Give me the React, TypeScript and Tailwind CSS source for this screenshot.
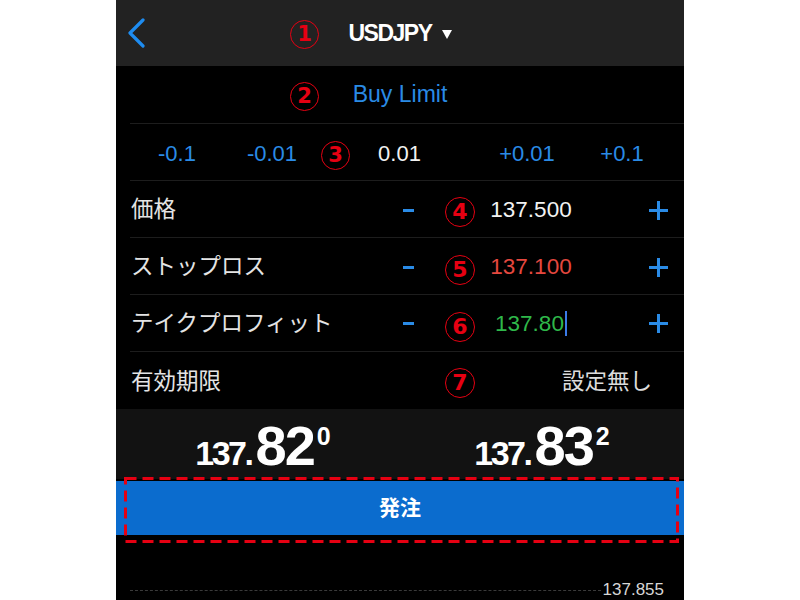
import React from 'react';

const Circled: React.FC<{ n: number; className: string }> = ({ n, className }) => (
  <div
    className={`absolute flex items-center justify-center rounded-full border-[1.5px] border-[#e60012] text-[#e60012] font-bold leading-none font-['DejaVu_Sans',sans-serif] ${className}`}
  >
    {n}
  </div>
);

const Minus: React.FC = () => (
  <div className="w-[40px] flex justify-center">
    <div className="w-[11px] h-[3px] bg-[#2a8be6]" />
  </div>
);

const Plus: React.FC = () => (
  <div className="w-[40px] flex justify-center">
    <svg width="21" height="21" viewBox="0 0 21 21">
      <path d="M10.5 1v19M1 10.5h19" stroke="#2a8be6" strokeWidth="3" />
    </svg>
  </div>
);

type RowProps = {
  label: string;
  value: string;
  valueColor: string;
  cursor?: boolean;
  height: string;
};

const PriceRow: React.FC<RowProps> = ({ label, value, valueColor, cursor, height }) => (
  <div className={`ml-[14px] ${height} border-b border-[#1d1d1d] flex items-center pr-[6px] pt-[2px]`}>
    <div className="flex-1 text-[22.5px] text-[#e4e4e4] pl-[1px]">{label}</div>
    <Minus />
    <div className={`ml-[38px] w-[130px] flex items-center justify-center text-[22.5px] ${valueColor}`}>
      <span>{value}</span>
      {cursor && <span className="inline-block w-[2px] h-[25px] bg-[#3b7be8] ml-[1px]" />}
    </div>
    <div className="ml-[42px]">
      <Plus />
    </div>
  </div>
);

const Quote: React.FC<{ big: string; sup: string }> = ({ big, sup }) => (
  <div className="flex justify-center items-baseline text-white font-bold leading-none">
    <span className="text-[34px] tracking-[-2.5px]">137.</span>
    <span className="text-[56px] tracking-[-2px] ml-[4px]">{big}</span>
    <span className="text-[25px] relative -top-[20px] ml-[3px]">{sup}</span>
  </div>
);

export default function App() {
  return (
    <div className="w-full h-[600px] bg-white flex justify-center font-['Liberation_Sans','Noto_Sans_CJK_JP',sans-serif]">
      <div className="relative w-[568px] h-full bg-black overflow-hidden flex flex-col">
        {/* header */}
        <div className="h-[66px] bg-[#222222] grid grid-cols-[60px_1fr_60px] items-center shrink-0">
          <div className="pl-[11px]">
            <svg width="20" height="30" viewBox="0 0 20 30">
              <path d="M16 2L3 15l13 13" fill="none" stroke="#1e8cf0" strokeWidth="3.2" strokeLinecap="round" strokeLinejoin="round" />
            </svg>
          </div>
          <div className="flex items-center justify-center text-white">
            <span className="text-[23px] font-bold tracking-[-1.5px]">USDJPY</span>
            <svg className="ml-[10px] mt-[2px]" width="10" height="9" viewBox="0 0 10 9">
              <path d="M0 0h10L5 9z" fill="#fff" />
            </svg>
          </div>
          <div />
        </div>

        {/* order type */}
        <div className="ml-[14px] h-[58px] border-b border-[#1d1d1d] flex items-center justify-center text-[23px] text-[#2a8be6] shrink-0">
          <span className="mr-[14px]">Buy Limit</span>
        </div>

        {/* step row */}
        <div className="ml-[14px] h-[57px] border-b border-[#1d1d1d] flex items-center text-[22px] shrink-0 pt-[3px]">
          <div className="w-[90px] ml-[2px] text-center text-[#2a8be6]">-0.1</div>
          <div className="w-[90px] ml-[5px] text-center text-[#2a8be6]">-0.01</div>
          <div className="flex-1 text-center text-[#f2f2f2]">0.01</div>
          <div className="w-[90px] text-center text-[#2a8be6]">+0.01</div>
          <div className="w-[90px] ml-[5px] mr-[17px] text-center text-[#2a8be6]">+0.1</div>
        </div>

        <PriceRow label="価格" value="137.500" valueColor="text-[#f2f2f2]" height="h-[58px]" />
        <PriceRow label="ストップロス" value="137.100" valueColor="text-[#e5483f]" height="h-[57px]" />
        <PriceRow label="テイクプロフィット" value="137.80" valueColor="text-[#2fb84a]" cursor height="h-[58px]" />

        {/* expiry */}
        <div className="ml-[14px] h-[57px] flex items-center pr-[32px] pt-[2px] shrink-0">
          <div className="flex-1 text-[22.5px] text-[#e4e4e4] pl-[1px]">有効期限</div>
          <div className="text-[22.5px] text-[#dcdcdc]">設定無し</div>
        </div>

        {/* quotes */}
        <div className="h-[70px] bg-[#121212] grid grid-cols-2 pt-[9px] shrink-0">
          <div className="pl-[10px]">
            <Quote big="82" sup="0" />
          </div>
          <div>
            <Quote big="83" sup="2" />
          </div>
        </div>

        {/* order button */}
        <div className="mt-[2px] h-[54px] bg-[#0b6cce] flex items-center justify-center text-white text-[21px] font-bold shrink-0">
          発注
        </div>

        {/* chart line */}
        <div className="pt-[45px] shrink-0">
          <div className="ml-[14px] h-[20px] flex items-center pr-[20px]">
            <div className="flex-1 border-t border-dashed border-[#3a3a3a] mr-[2px]" />
            <span className="text-[17px] text-[#d6d6d6]">137.855</span>
          </div>
        </div>

        {/* annotations */}
        <Circled n={1} className="left-[174px] top-[20px] w-[29px] h-[29px] text-[21px]" />
        <Circled n={2} className="left-[174px] top-[82px] w-[29px] h-[29px] text-[21px]" />
        <Circled n={3} className="left-[205px] top-[141px] w-[29px] h-[29px] text-[21px]" />
        <Circled n={4} className="left-[329px] top-[197px] w-[30px] h-[30px] text-[22px]" />
        <Circled n={5} className="left-[329px] top-[255px] w-[30px] h-[30px] text-[22px]" />
        <Circled n={6} className="left-[329px] top-[312px] w-[30px] h-[30px] text-[22px]" />
        <Circled n={7} className="left-[329px] top-[368px] w-[30px] h-[30px] text-[22px]" />

        <svg className="absolute left-[8px] top-[477px]" width="556" height="67" viewBox="0 0 556 67">
          <rect x="1.5" y="1.5" width="552" height="63" fill="none" stroke="#e60012" strokeWidth="3" strokeDasharray="11 6" />
        </svg>
      </div>
    </div>
  );
}
